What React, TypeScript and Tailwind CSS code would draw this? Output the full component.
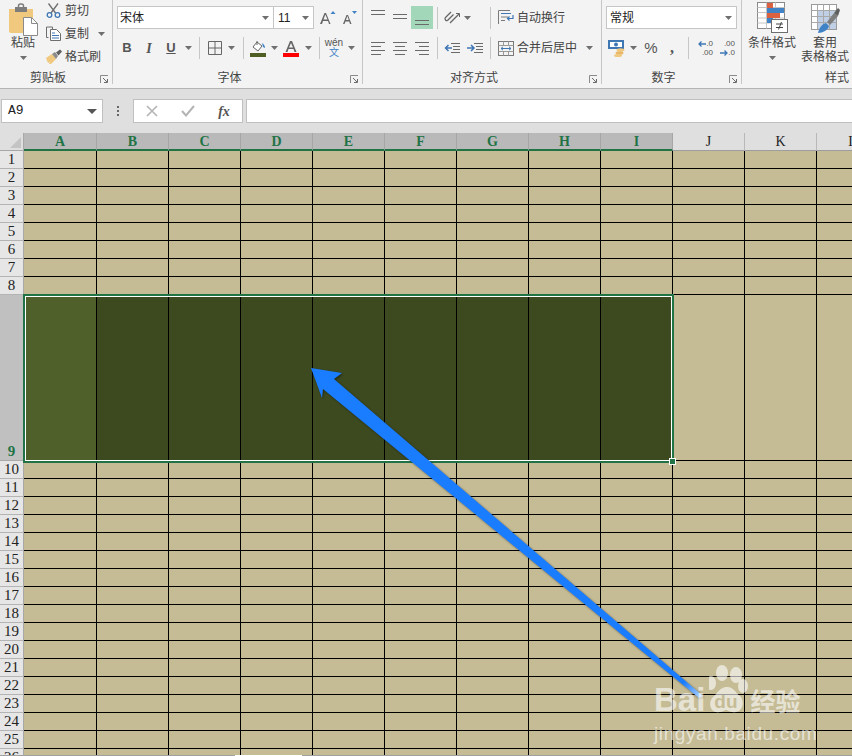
import React from 'react';

const columns = ['A', 'B', 'C', 'D', 'E', 'F', 'G', 'H', 'I', 'J', 'K', 'L'];
const rows = Array.from({ length: 26 }, (_, i) => i + 1);
const selectedColumns = new Set(['A', 'B', 'C', 'D', 'E', 'F', 'G', 'H', 'I']);

const uiFont = "font-['Liberation_Sans','Noto_Sans_CJK_SC',sans-serif]";

const Caret: React.FC<{ className?: string }> = ({ className = '' }) => (
  <span className={`flex items-center justify-center ${className}`}>
    <svg width="7" height="4" viewBox="0 0 7 4"><path d="M0 0h7L3.5 4z" fill="#6f6f6f" /></svg>
  </span>
);

const Sep: React.FC<{ className?: string }> = ({ className = 'w-[8px]' }) => (
  <span className={`flex h-[22px] justify-center ${className}`}>
    <span className="h-full w-px bg-[#c6c6c6]" />
  </span>
);

const Launcher = () => (
  <span className="flex w-[16px] items-center justify-center pt-[3px]">
    <svg width="9" height="9" viewBox="0 0 9 9" fill="none">
      <path d="M0.5 8V0.5H8" stroke="#8a8a8a" />
      <path d="M3 3l4 4M7.5 4v3.5H4" stroke="#6a6a6a" />
    </svg>
  </span>
);

const GroupLabel: React.FC<{ label: string; className?: string }> = ({ label, className = '' }) => (
  <div className={`flex h-[14px] shrink-0 items-center text-[12px] leading-none text-[#444] ${className}`}>
    <span className="flex-1 text-center">{label}</span>
    <Launcher />
  </div>
);

// lines for the alignment buttons: x offsets are fixed per icon
const AlignIcon: React.FC<{ lines: [number, number][]; y?: number }> = ({ lines, y = 0 }) => (
  <svg width="15" height="13" viewBox="0 0 15 13">
    {lines.map(([x1, x2], i) => (
      <rect key={i} x={x1} y={y + i * 4} width={x2 - x1} height="1" fill="#6a6a6a" />
    ))}
  </svg>
);

const PasteIcon = () => (
  <svg width="30" height="33" viewBox="0 0 30 33">
    <path d="M1 6h24v24H3a2 2 0 0 1-2-2z" fill="#f0c97e" />
    <rect x="7" y="4" width="12" height="5" fill="#7d7d7d" />
    <rect x="10.500" y="1" width="5" height="5" rx="2" fill="none" stroke="#7d7d7d" strokeWidth="1.500" />
    <path d="M15.500 14.500h8l6 6v12h-14z" fill="#fff" stroke="#8a8a8a" />
    <path d="M23.500 14.500v6h6" fill="none" stroke="#8a8a8a" />
  </svg>
);

const ScissorsIcon = () => (
  <svg width="15" height="15" viewBox="0 0 15 15" fill="none">
    <path d="M2.500 0.500l7 9.500M12 0.500l-7 9.500" stroke="#6e6e6e" strokeWidth="1.300" />
    <circle cx="3.500" cy="12" r="2.300" stroke="#3f77b5" strokeWidth="1.300" />
    <circle cx="11.500" cy="12" r="2.300" stroke="#3f77b5" strokeWidth="1.300" />
  </svg>
);

const CopyIcon = () => (
  <svg width="15" height="15" viewBox="0 0 15 15" fill="none">
    <path d="M2.500 11.500H0.500V1h6v2" stroke="#6e6e6e" />
    <path d="M4.500 3.500h6l4 4v7h-10z" fill="#fff" stroke="#6e6e6e" />
    <path d="M6 7h3M6 9.500h7M6 12h7" stroke="#3f77b5" />
  </svg>
);

const PainterIcon = () => (
  <svg width="16" height="15" viewBox="0 0 16 15">
    <path d="M0 9l6-4 4 5-5 5H3l1-2-2 1z" fill="#f0c97e" />
    <path d="M6 5l3-2 3 4-2 3z" fill="#8a8a8a" />
    <path d="M10 3.500l4-3 2 2-3.500 4z" fill="#5f5f5f" />
  </svg>
);

const WrapIcon = () => (
  <svg width="16" height="15" viewBox="0 0 16 15" fill="none">
    <path d="M0.500 14V0.500H12" stroke="#7a7a7a" />
    <path d="M3 3.500h10M3 7h7M3 10.500h4" stroke="#7a7a7a" />
    <path d="M3 3.500h10" stroke="#3f77b5" />
    <path d="M15 5v3.500H9.500M11.500 6.500l-2 2 2 2" stroke="#3f77b5" strokeWidth="1.200" />
  </svg>
);

const MergeIcon = () => (
  <svg width="16" height="15" viewBox="0 0 16 15" fill="none">
    <rect x="0.500" y="0.500" width="15" height="14" stroke="#7a7a7a" />
    <path d="M0.500 4.500h15M0.500 10.500h15M5.500 0.500v4M10.500 0.500v4M5.500 10.500v4M10.500 10.500v4" stroke="#9a9a9a" />
    <path d="M3 7.500h10M5 5.800L3 7.500l2 1.700M11 5.800l2 1.700-2 1.700" stroke="#3f77b5" />
  </svg>
);

const CondFormatIcon = () => (
  <svg width="31" height="31" viewBox="0 0 31 31" fill="none">
    <rect x="0.500" y="0.500" width="27" height="26" fill="#fff" stroke="#8a8a8a" />
    <path d="M0.500 5.500h27M0.500 10.500h27M0.500 16h27M0.500 21h27M9.500 0.500v26M18.500 0.500v26" stroke="#c4c4c4" />
    <rect x="10" y="1" width="6" height="5" fill="#dc6141" />
    <rect x="10" y="6" width="17" height="5" fill="#3f83c6" />
    <rect x="10" y="11" width="13" height="5" fill="#dc6141" />
    <rect x="10" y="16" width="6" height="5" fill="#3f83c6" />
    <rect x="14.500" y="17.500" width="16" height="13" fill="#fff" stroke="#6e6e6e" />
    <path d="M19 22h7M19 25.500h7M24.500 20l-3 7.500" stroke="#444" />
  </svg>
);

const TableStyleIcon = () => (
  <svg width="29" height="30" viewBox="0 0 29 30" fill="none">
    <rect x="0.500" y="0.500" width="25" height="25" fill="#fff" stroke="#9a9a9a" />
    <rect x="7" y="7" width="18" height="18" fill="#bfd0e6" />
    <path d="M0.500 6.500h25M0.500 12.500h25M0.500 18.500h25M6.500 0.500v25M12.500 0.500v25M18.500 0.500v25" stroke="#a8a8a8" />
    <path d="M7 29c1-5 4-9 8-10l3 3c-1 4-6 7-11 7z" fill="#3f83c6" />
    <path d="M16 18l7-9 4 3-8 9z" fill="#7d7d7d" />
    <path d="M23 9l4-5 2 2-2 6z" fill="#5f5f5f" />
  </svg>
);

const Ribbon = () => (
  <div className={`flex h-[88px] shrink-0 overflow-hidden bg-[#f3f3f3] text-[#444] ${uiFont}`}>
    {/* clipboard */}
    <div className="flex h-[84px] w-[113px] shrink-0 flex-col border-r border-[#c6c6c6]">
      <div className="flex h-[66px] shrink-0">
        <div className="flex w-[44px] shrink-0 flex-col items-center pt-[3px] pl-[2px]">
          <PasteIcon />
          <span className="-mt-[1px] text-[12px] leading-[16px]">粘贴</span>
          <Caret className="mt-[4px] h-[6px]" />
        </div>
        <div className="-mt-[1px] flex flex-col pl-[2px] text-[12px]">
          <div className="flex h-[23px] shrink-0 items-center gap-[4px]"><ScissorsIcon /><span>剪切</span></div>
          <div className="flex h-[23px] shrink-0 items-center gap-[4px]"><CopyIcon /><span>复制</span><Caret className="ml-[4px] w-[8px]" /></div>
          <div className="flex h-[23px] shrink-0 items-center gap-[3px]"><PainterIcon /><span>格式刷</span></div>
        </div>
      </div>
      <GroupLabel label="剪贴板" className="mt-[5px]" />
    </div>

    {/* font */}
    <div className="flex h-[84px] w-[250px] shrink-0 flex-col border-r border-[#c6c6c6]">
      <div className="mt-[6px] flex h-[23px] shrink-0 items-center pl-[4px]">
        <div className="flex h-[23px] w-[157px] items-center justify-between border border-[#c6c6c6] bg-white pr-[4px] pl-[2px] text-[12px] text-[#222]">
          <span>宋体</span><Caret />
        </div>
        <div className="flex h-[23px] w-[40px] items-center justify-between border border-l-0 border-[#c6c6c6] bg-white pr-[4px] pl-[4px] text-[12px] text-[#222]">
          <span>11</span><Caret />
        </div>
        <svg className="ml-[6px]" width="16" height="15" viewBox="0 0 16 15">
          <path d="M0 14L4.500 3h1.500l4.500 11H9L8 11H3l-1 3zM3.500 9.500h4L5.300 4.500z" fill="#666" />
          <path d="M10.500 4l2.500-3 2.500 3z" fill="#3f83c6" />
        </svg>
        <svg className="ml-[7px]" width="15" height="15" viewBox="0 0 15 15">
          <path d="M0 14L3.500 5h1.500l3.500 9H7l-.8-2.500H2.500L1.500 14zM3 10h2.800L4.300 6z" fill="#666" />
          <path d="M9 1h5l-2.500 3z" fill="#3f83c6" />
        </svg>
      </div>
      <div className="mt-[7px] flex h-[24px] shrink-0 items-center pl-[3px]">
        <span className="w-[22px] text-center font-['Liberation_Sans'] text-[13px] font-bold text-[#555]">B</span>
        <span className="w-[22px] text-center font-['Liberation_Serif'] text-[14px] font-bold text-[#555] italic">I</span>
        <span className="w-[22px] text-center font-['Liberation_Sans'] text-[13px] font-bold text-[#555] underline">U</span>
        <Caret className="w-[12px]" />
        <Sep className="w-[10px]" />
        <span className="flex w-[21px] justify-center">
          <svg width="14" height="14" viewBox="0 0 14 14" fill="none"><path d="M0.500 0.500h13v13h-13zM7 0.500v13M0.500 7h13" stroke="#666" /></svg>
        </span>
        <Caret className="w-[12px]" />
        <Sep className="w-[12px]" />
        <span className="flex w-[18px] justify-center">
          <svg width="16" height="17" viewBox="0 0 16 17" fill="none">
            <path d="M3 7l4-5 5 4-4 5z" fill="#fff" stroke="#666" />
            <path d="M7 1v4" stroke="#666" />
            <path d="M12 3c2 1 3 3 3 5l-2-1z" fill="#3f83c6" />
            <rect y="13" width="16" height="4" fill="#4f5f24" />
          </svg>
        </span>
        <Caret className="w-[14px]" />
        <span className="flex w-[20px] justify-center">
          <svg width="16" height="17" viewBox="0 0 16 17">
            <path d="M2.500 12L7 1h2l4.500 11h-2l-1-3h-5l-1 3zM6 7.500h4L8 3z" fill="#666" />
            <rect y="13" width="16" height="4" fill="#ff0000" />
          </svg>
        </span>
        <Caret className="w-[14px]" />
        <Sep className="w-[8px]" />
        <span className="flex w-[22px] flex-col items-center text-[10px] leading-[10px]">
          <span className="font-['Liberation_Sans'] text-[#555]">wén</span>
          <span className="text-[#3f83c6]">文</span>
        </span>
        <Caret className="w-[12px]" />
      </div>
      <GroupLabel label="字体" className="mt-[11px]" />
    </div>

    {/* alignment */}
    <div className="flex h-[84px] w-[239px] shrink-0 flex-col border-r border-[#c6c6c6]">
      <div className="mt-[6px] flex h-[23px] shrink-0 items-center pl-[4px]">
        <span className="flex h-[23px] w-[22px] items-start justify-center pt-[3px]"><AlignIcon lines={[[0, 14], [0, 14]]} y={1} /></span>
        <span className="flex h-[23px] w-[22px] items-center justify-center"><AlignIcon lines={[[0, 14], [0, 14]]} y={3} /></span>
        <span className="flex h-[23px] w-[22px] items-end justify-center bg-[#a3d7b9] pb-[1px]"><AlignIcon lines={[[0, 14], [0, 14]]} y={5} /></span>
        <Sep />
        <span className="flex w-[21px] justify-center">
          <svg width="16" height="16" viewBox="0 0 16 16" fill="none">
            <path d="M1 8l6-6M3.500 10.500l6-6M1 8c0 2 1 3 2.500 2.500M6 13L15 4" stroke="#666" strokeWidth="1.300" />
            <path d="M12 3.500h3.500V7" stroke="#666" />
          </svg>
        </span>
        <Caret className="w-[10px]" />
        <Sep className="ml-[14px] w-[8px]" />
        <span className="ml-[4px] flex w-[16px]"><WrapIcon /></span>
        <span className="ml-[3px] text-[12px]">自动换行</span>
      </div>
      <div className="mt-[7px] flex h-[24px] shrink-0 items-center pl-[4px]">
        <span className="flex w-[22px] justify-center"><AlignIcon lines={[[0, 14], [0, 10], [0, 14], [0, 10]]} /></span>
        <span className="flex w-[22px] justify-center"><AlignIcon lines={[[0, 14], [2, 12], [0, 14], [2, 12]]} /></span>
        <span className="flex w-[22px] justify-center"><AlignIcon lines={[[0, 14], [4, 14], [0, 14], [4, 14]]} /></span>
        <Sep />
        <span className="flex w-[22px] justify-center">
          <svg width="16" height="11" viewBox="0 0 16 11" fill="none">
            <path d="M7 0.500h9M9 3.500h7M9 6.500h7M7 9.500h9" stroke="#6a6a6a" />
            <path d="M8 5H1.500M4.500 2L1.500 5l3 3" stroke="#3f77b5" strokeWidth="1.500" />
          </svg>
        </span>
        <span className="flex w-[23px] justify-center">
          <svg width="16" height="11" viewBox="0 0 16 11" fill="none">
            <path d="M7 0.500h9M9 3.500h7M9 6.500h7M7 9.500h9" stroke="#6a6a6a" />
            <path d="M0 5h7M4 2l3 3-3 3" stroke="#3f77b5" strokeWidth="1.500" />
          </svg>
        </span>
        <Sep className="w-[8px]" />
        <span className="ml-[4px] flex w-[16px]"><MergeIcon /></span>
        <span className="ml-[3px] text-[12px]">合并后居中</span>
        <Caret className="ml-[6px] w-[12px]" />
      </div>
      <GroupLabel label="对齐方式" className="mt-[11px]" />
    </div>

    {/* number */}
    <div className="flex h-[84px] w-[140px] shrink-0 flex-col border-r border-[#c6c6c6]">
      <div className="mt-[6px] flex h-[23px] shrink-0 pl-[4px]">
        <div className="flex h-[23px] w-[131px] items-center justify-between border border-[#c6c6c6] bg-white pr-[4px] pl-[3px] text-[12px] text-[#222]">
          <span>常规</span><Caret />
        </div>
      </div>
      <div className="mt-[7px] flex h-[24px] shrink-0 items-center pl-[4px]">
        <span className="flex w-[20px] justify-center">
          <svg width="17" height="17" viewBox="0 0 17 17">
            <rect x="0" y="0" width="16" height="9" fill="#3f77b5" />
            <rect x="2" y="2" width="12" height="5" fill="#fff" />
            <circle cx="8" cy="4.500" r="2" fill="#3f77b5" />
            <ellipse cx="12.500" cy="10" rx="4" ry="1.800" fill="#f0c97e" />
            <ellipse cx="11.500" cy="13" rx="4" ry="1.800" fill="#e9b869" />
            <ellipse cx="10" cy="15.500" rx="4" ry="1.500" fill="#f0c97e" />
          </svg>
        </span>
        <Caret className="w-[14px]" />
        <span className="w-[22px] text-center font-['Liberation_Sans'] text-[15px] text-[#555]">%</span>
        <span className="w-[20px] text-center font-['Liberation_Serif'] text-[16px] leading-[12px] font-bold text-[#555]">,</span>
        <Sep className="w-[12px]" />
        <span className="flex w-[19px] flex-col items-end font-['Liberation_Sans'] text-[8px] leading-[9px] text-[#555]">
          <span className="flex items-center"><svg width="8" height="6" viewBox="0 0 8 6" fill="none"><path d="M8 3H1M3.500 0.500L1 3l2.500 2.500" stroke="#3f77b5" strokeWidth="1.300" /></svg>.0</span>
          <span>.00</span>
        </span>
        <span className="ml-[3px] flex w-[19px] flex-col items-end font-['Liberation_Sans'] text-[8px] leading-[9px] text-[#555]">
          <span>.00</span>
          <span className="flex items-center"><svg width="8" height="6" viewBox="0 0 8 6" fill="none"><path d="M0 3h7M4.500 0.500L7 3 4.500 5.500" stroke="#3f77b5" strokeWidth="1.300" /></svg>.0</span>
        </span>
      </div>
      <GroupLabel label="数字" className="mt-[11px]" />
    </div>

    {/* styles */}
    <div className="flex h-[84px] w-[111px] shrink-0 flex-col pl-[4px]">
      <div className="flex h-[66px] shrink-0 text-[12px] leading-[14px]">
        <div className="flex w-[52px] shrink-0 flex-col items-center pt-[2px]">
          <CondFormatIcon />
          <span className="mt-[3px] whitespace-nowrap">条件格式</span>
          <Caret className="mt-[5px] h-[6px]" />
        </div>
        <div className="ml-[3px] flex w-[48px] shrink-0 flex-col items-center pt-[4px]">
          <TableStyleIcon />
          <span className="mt-[2px] whitespace-nowrap">套用</span>
          <span className="whitespace-nowrap">表格格式</span>
        </div>
      </div>
      <div className="mt-[5px] flex h-[14px] shrink-0 items-center justify-end pr-[4px] text-[12px] leading-none">样式</div>
    </div>
  </div>
);

const FormulaBar = () => (
  <div className="flex h-[45px] shrink-0 items-start border-t border-[#b4b4b4] bg-[#dfdfdf] pt-[10px]">
    <div className="ml-[1px] flex h-[24px] w-[102px] items-center justify-between border border-[#c0c0c0] bg-white pr-[5px] pl-[6px] font-['Liberation_Mono'] text-[13px] text-[#222]">
      <span>A9</span>
      <svg width="10" height="5" viewBox="0 0 10 5"><path d="M0 0h10L5 5z" fill="#555" /></svg>
    </div>
    <div className="flex h-[24px] w-[30px] flex-col items-center justify-center gap-[2px]">
      <span className="h-[2px] w-[2px] bg-[#666]" />
      <span className="h-[2px] w-[2px] bg-[#666]" />
      <span className="h-[2px] w-[2px] bg-[#666]" />
    </div>
    <div className="flex h-[24px] w-[110px] items-center border border-[#c0c0c0] bg-white">
      <span className="flex w-[36px] justify-center">
        <svg width="12" height="12" viewBox="0 0 12 12" fill="none"><path d="M1 1l10 10M11 1L1 11" stroke="#b4b4b4" strokeWidth="1.600" /></svg>
      </span>
      <span className="flex w-[36px] justify-center">
        <svg width="14" height="12" viewBox="0 0 14 12" fill="none"><path d="M1 6l4 4.500L13 1" stroke="#b4b4b4" strokeWidth="2" /></svg>
      </span>
      <span className="w-[36px] text-center font-['Liberation_Serif'] text-[14px] font-bold text-[#555] italic">fx</span>
    </div>
    <div className="ml-[3px] h-[24px] flex-1 border-y border-l border-[#c0c0c0] bg-white" />
  </div>
);

const Sheet = () => (
  <div className="relative min-h-0 flex-1 overflow-hidden font-['Liberation_Serif',serif]">
    <div className="grid w-[889px] grid-cols-[24px_73px_repeat(11,72px)]">
      <div className="flex h-[18px] items-end justify-end border-r border-b border-[#a8a8a8] bg-[#dfdfdf] pr-[2px] pb-[2px]">
        <svg width="11" height="11" viewBox="0 0 11 11"><path d="M11 0v11H0z" fill="#c4c4c4" /></svg>
      </div>
      {columns.map(col =>
        selectedColumns.has(col) ? (
          <div key={col} className="flex h-[18px] items-center justify-center border-r border-b-2 border-r-[#a6a6a6] border-b-[#217346] bg-[#b9b9b9] text-[14px] font-bold text-[#217346]">{col}</div>
        ) : (
          <div key={col} className="flex h-[18px] items-center justify-center border-r border-b border-r-[#b8b8b8] border-b-[#9e9e9e] bg-[#dfdfdf] text-[14px] text-[#222]">{col}</div>
        )
      )}
      {rows.map(row => (
        <React.Fragment key={row}>
          {row === 9 ? (
            <div className="flex h-[166px] items-end justify-center border-r border-b border-[#a8a8a8] bg-[#c0c0c0] pb-[1px] text-[15px] leading-[16px] font-bold text-[#217346]">{row}</div>
          ) : (
            <div className="flex h-[18px] items-center justify-center border-r border-b border-r-[#a8a8a8] border-b-[#b4b4b4] bg-[#e6e6e6] text-[15px] leading-none text-[#222]">{row}</div>
          )}
          {columns.map(col => {
            if (row === 9 && col === 'A') return <div key={col} className="h-[166px] border-r border-black bg-[#50602b]" />;
            if (row === 9 && selectedColumns.has(col)) return <div key={col} className="h-[166px] border-r border-black bg-[#3d4a20]" />;
            if (row === 9) return <div key={col} className="h-[166px] border-r border-b border-black bg-[#c5bc96]" />;
            return <div key={col} className="h-[18px] border-r border-b border-black bg-[#c5bc96]" />;
          })}
        </React.Fragment>
      ))}
    </div>

    {/* selection box */}
    <div className="absolute top-[161px] left-[23px] h-[169px] w-[651px] border-2 border-[#217346]">
      <div className="h-full w-full border border-white" />
      <div className="absolute right-[-4px] bottom-[-4px] h-[7px] w-[7px] border border-white bg-[#217346]" />
    </div>
  </div>
);

const Watermark = () => (
  <div className="absolute top-[665px] left-[654px] w-[160px] font-['Liberation_Sans'] text-white/60">
    <svg className="absolute top-0 left-[55px]" width="40" height="48" viewBox="0 0 40 48">
      <ellipse cx="13" cy="8" rx="6" ry="8" fill="#fff" fillOpacity=".6" />
      <ellipse cx="27" cy="10" rx="6" ry="8" fill="#fff" fillOpacity=".6" />
      <ellipse cx="2" cy="18" rx="5" ry="7" fill="#fff" fillOpacity=".6" />
      <ellipse cx="34" cy="21" rx="5" ry="7" fill="#fff" fillOpacity=".6" />
      <path d="M7 47c-6-1-8-10-3-15 5-4 6-9 13-10 7-1 9 5 14 9 5 5 3 15-4 16-6 1-8-2-10-2s-4 3-10 2z" fill="#fff" fillOpacity=".6" />
    </svg>
    <div className="flex items-start">
      <span className="mt-[16px] text-[33px] leading-[38px] font-bold tracking-[0px]">Bai</span>
      <span className="relative mt-[27px] ml-[9px] text-[19px] leading-[20px] font-bold text-[#c5bc96]">du</span>
      <span className="mt-[20px] ml-[13px] whitespace-nowrap font-['Noto_Sans_CJK_SC'] text-[25px] leading-[30px] font-bold">经验</span>
    </div>
    <div className="mt-[4px] text-[19px] leading-[22px] tracking-[0.6px] whitespace-nowrap">jingyan.baidu.com</div>
  </div>
);

const App: React.FC = () => (
  <div className="relative flex h-[756px] w-[852px] flex-col overflow-hidden bg-[#dfdfdf]">
    <Ribbon />
    <FormulaBar />
    <Sheet />
    <div className="flex h-px shrink-0 bg-[#a0a0a0]">
      <div className="ml-[235px] h-px w-[67px] bg-white" />
    </div>

    {/* annotation arrow */}
    <svg className="pointer-events-none absolute top-0 left-0 drop-shadow-[1px_1px_1px_rgba(0,0,0,0.45)]" width="852" height="756" viewBox="0 0 852 756">
      <defs>
        <linearGradient id="tail" gradientUnits="userSpaceOnUse" x1="684" y1="682" x2="702" y2="698">
          <stop offset="0" stopColor="#1a7cff" />
          <stop offset="1" stopColor="#b5d6ff" />
        </linearGradient>
      </defs>
      <polygon points="311,368 342,373 334,379 703,696 699,698 323,389 322,398" fill="url(#tail)" />
    </svg>

    <Watermark />
  </div>
);

export default App;
